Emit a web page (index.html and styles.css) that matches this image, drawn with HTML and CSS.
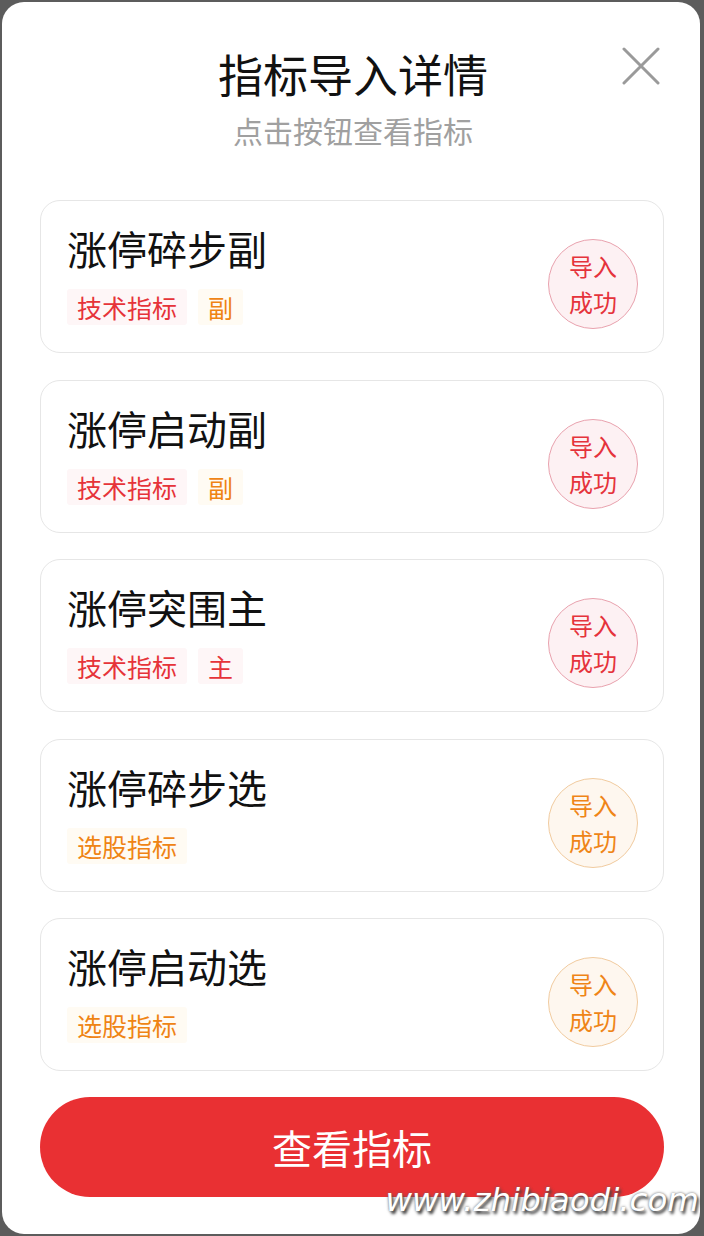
FILE: index.html
```html
<!DOCTYPE html>
<html lang="zh-CN">
<head>
<meta charset="utf-8">
<title>指标导入详情</title>
<link rel="stylesheet" href="styles.css">
</head>
<body>
<div class="modal">
  <div class="header">
    <h1 class="title">指标导入详情</h1>
    <p class="subtitle">点击按钮查看指标</p>
    <button class="close" aria-label="关闭">
      <svg width="38" height="38" viewBox="0 0 38 38"><path d="M2 2 L36 36 M36 2 L2 36" stroke="#9a9a9a" stroke-width="3" fill="none" stroke-linecap="round"/></svg>
    </button>
  </div>
  <div class="list">
    <div class="card">
      <div class="info">
        <div class="name">涨停碎步副</div>
        <div class="tags"><span class="tag red">技术指标</span><span class="tag orange">副</span></div>
      </div>
      <div class="badge red-badge">导入<br>成功</div>
    </div>
    <div class="card">
      <div class="info">
        <div class="name">涨停启动副</div>
        <div class="tags"><span class="tag red">技术指标</span><span class="tag orange">副</span></div>
      </div>
      <div class="badge red-badge">导入<br>成功</div>
    </div>
    <div class="card">
      <div class="info">
        <div class="name">涨停突围主</div>
        <div class="tags"><span class="tag red">技术指标</span><span class="tag red">主</span></div>
      </div>
      <div class="badge red-badge">导入<br>成功</div>
    </div>
    <div class="card">
      <div class="info">
        <div class="name">涨停碎步选</div>
        <div class="tags"><span class="tag orange">选股指标</span></div>
      </div>
      <div class="badge orange-badge">导入<br>成功</div>
    </div>
    <div class="card">
      <div class="info">
        <div class="name">涨停启动选</div>
        <div class="tags"><span class="tag orange">选股指标</span></div>
      </div>
      <div class="badge orange-badge">导入<br>成功</div>
    </div>
  </div>
  <button class="view-btn">查看指标</button>
</div>
<div class="watermark">www.zhibiaodi.com</div>
</body>
</html>
```

FILE: styles.css
```css
* { box-sizing: border-box; }
html, body { margin: 0; padding: 0; }
body {
  background: #5c5c5c;
  width: 704px;
  height: 1236px;
  padding: 2px 4px 2px 2px;
  font-family: "Noto Sans CJK SC", "Noto Sans", sans-serif;
  position: relative;
  overflow: hidden;
}
.modal {
  background: #fff;
  border-radius: 22px;
  height: 1232px;
  width: 698px;
  padding: 42px 36px 0 38px;
  display: flex;
  flex-direction: column;
}
.header {
  position: relative;
  text-align: center;
  margin-bottom: 50px;
}
.title {
  margin: 0;
  font-size: 45px;
  line-height: 60px;
  font-weight: 400;
  color: #111;
  padding-left: 2px;
}
.subtitle {
  margin: 6px 0 0;
  font-size: 30px;
  line-height: 40px;
  color: #a0a0a0;
  padding-left: 2px;
}
.close {
  position: absolute;
  right: 4px;
  top: 3px;
  width: 38px;
  height: 38px;
  padding: 0;
  border: 0;
  background: none;
  display: flex;
}
.list {
  display: flex;
  flex-direction: column;
  gap: 26.5px;
}
.card {
  height: 153px;
  border: 1px solid #e6e6e6;
  border-radius: 20px;
  padding: 18px 25px 0 26px;
  display: flex;
  justify-content: space-between;
  align-items: flex-start;
}
.name {
  font-size: 40px;
  line-height: 58px;
  color: #111;
}
.tags {
  display: flex;
  gap: 11px;
  margin-top: 12px;
}
.tag {
  height: 36px;
  line-height: 36px;
  padding: 0 10px;
  font-size: 25px;
  border-radius: 3px;
}
.tag.red { color: #e63339; background: #fef6f7; }
.tag.orange { color: #ef8414; background: #fffbf3; }
.badge {
  width: 90px;
  height: 90px;
  border-radius: 50%;
  margin-top: 20px;
  display: flex;
  align-items: center;
  justify-content: center;
  text-align: center;
  font-size: 24px;
  line-height: 36px;
}
.red-badge { color: #e5333b; background: #fdf1f3; border: 1px solid #e9a2ae; }
.orange-badge { color: #ef8517; background: #fef7ef; border: 1px solid #f1cb9f; }
.view-btn {
  margin-top: 26px;
  height: 100px;
  border: 0;
  border-radius: 50px;
  background: #e93033;
  color: #fff;
  font-family: "Noto Sans CJK SC", sans-serif;
  font-size: 40px;
  padding: 0;
  width: 624px;
}
.watermark {
  position: absolute;
  right: 5px;
  bottom: 18px;
  font-family: "DejaVu Sans", sans-serif;
  font-style: italic;
  font-size: 32.5px;
  line-height: 36px;
  color: #fff;
  text-shadow: 2px 3px 3px #444, 0 0 3px #666;
}
```
